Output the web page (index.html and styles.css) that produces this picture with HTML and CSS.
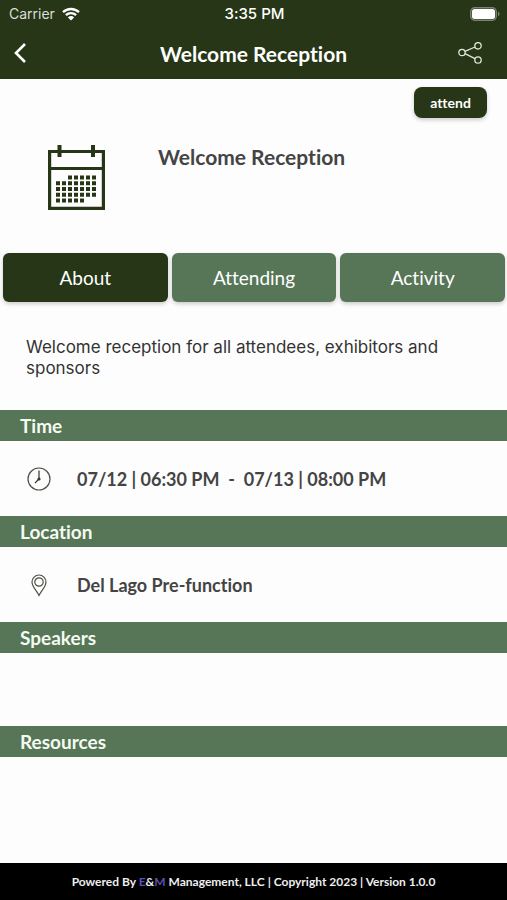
FILE: index.html
```html
<!DOCTYPE html>
<html lang="en">

<head>
  <meta charset="UTF-8" />
  <meta name="viewport" content="width=device-width, initial-scale=1" />
  <title>Welcome Reception</title>
  <link rel="stylesheet" href="styles.css">
</head>

<body>
  <header class="header">
    <div class="status">
      <div class="carrier">
        <span>Carrier</span>
        <svg viewBox="0 0 18 14" width="18" height="14">
          <path d="M1 5.2a11.6 11.6 0 0 1 16 0M3.9 8.2a7.4 7.4 0 0 1 10.2 0" fill="none" stroke="#fff" stroke-width="2.4" />
          <path d="M9 13.6l-3.1-3.2a4.4 4.4 0 0 1 6.2 0z" fill="#fff" />
        </svg>
      </div>
      <div class="clock">3:35 PM</div>
      <svg class="battery" viewBox="0 0 30 14" width="30" height="14">
        <rect x="0.75" y="0.75" width="25.5" height="12.5" rx="4" fill="none" stroke="#7b8374" stroke-width="1.5" />
        <rect x="2" y="2" width="23" height="10" rx="2.5" fill="#fff" />
        <path d="M28 4.8c2 .6 2 3.8 0 4.4z" fill="#7b8374" />
      </svg>
    </div>
    <div class="nav">
      <button class="icon-btn" type="button" aria-label="Back">
        <svg viewBox="0 0 14 22" width="14" height="22">
          <path d="M12 2L3 11l9 9" fill="none" stroke="#fff" stroke-width="2.6" />
        </svg>
      </button>
      <h1>Welcome Reception</h1>
      <button class="icon-btn share" type="button" aria-label="Share">
        <svg viewBox="0 0 24 22" width="24" height="22" fill="none" stroke="#dfe6da" stroke-width="1.3">
          <circle cx="4" cy="10.5" r="3.2" />
          <circle cx="20" cy="3.8" r="3.2" />
          <circle cx="20" cy="18" r="3.2" />
          <path d="M7 9.3l10-4.3M7 11.7l10 5" />
        </svg>
      </button>
    </div>
  </header>

  <main>
    <div class="actions">
      <button class="attend" type="button">attend</button>
    </div>

    <div class="event">
      <svg viewBox="0 0 57 65" width="57" height="65">
        <path d="M1.6 6.5h53.8v56.9H1.6zM1.6 23.5h53.8" fill="none" stroke="#273617" stroke-width="3.2" />
        <path d="M11.5 0v12M45 0v12" stroke="#273617" stroke-width="4" />
        <!-- days of the month -->
        <g stroke="#273617" stroke-width="4" stroke-dasharray="4 2">
          <path d="M20 32.5h28M8 38.2h40M8 44h40M8 49.7h40M8 55.4h28" />
        </g>
      </svg>
      <h2>Welcome Reception</h2>
    </div>

    <div class="tabs">
      <button class="tab active" type="button">About</button>
      <button class="tab" type="button">Attending</button>
      <button class="tab" type="button">Activity</button>
    </div>

    <p class="about">Welcome reception for all attendees, exhibitors and sponsors</p>

    <section>
      <h3>Time</h3>
      <div class="row">
        <svg viewBox="0 0 24 24" width="24" height="24">
          <circle cx="12" cy="12" r="11" fill="none" stroke="#4b5044" stroke-width="1.2" />
          <path d="M12 3.5V12l-4 4" fill="none" stroke="#33382c" stroke-width="1.2" />
          <circle cx="12" cy="12" r="1.6" fill="#33382c" />
        </svg>
        <span>07/12 | 06:30 PM&nbsp; - &nbsp;07/13 | 08:00 PM</span>
      </div>
    </section>

    <section>
      <h3>Location</h3>
      <div class="row">
        <svg viewBox="0 0 24 24" width="24" height="24" fill="none" stroke="#4b5044" stroke-width="1.2">
          <path d="M12 22.5C9.5 17.5 5 13.5 5 9a7 7 0 0 1 14 0c0 4.5-4.5 8.5-7 13.5z" />
          <circle cx="12" cy="9" r="4.2" />
        </svg>
        <span>Del Lago Pre-function</span>
      </div>
    </section>

    <section>
      <h3>Speakers</h3>
      <div class="empty"></div>
    </section>

    <section>
      <h3>Resources</h3>
    </section>
  </main>

  <footer>Powered By <span class="brand">E</span>&amp;<span class="brand">M</span> Management, LLC | Copyright 2023 | Version 1.0.0</footer>
</body>

</html>
```

FILE: styles.css
```css
* {
  box-sizing: border-box;
}

body {
  margin: 0;
  min-height: 100vh;
  display: flex;
  flex-direction: column;
  background-color: #fdfdfd;
  font-family: Lato, "Liberation Sans", sans-serif;
  font-variant-ligatures: none;
}

h1, h2, h3, p {
  margin: 0;
}

button {
  border: none;
  padding: 0;
  color: #fff;
  font-family: inherit;
  font-variant-ligatures: none;
  cursor: pointer;
}

svg {
  display: block;
}

/* header */
.header {
  background-color: #273617;
  color: #fff;
}

.status {
  display: grid;
  grid-template-columns: 1fr auto 1fr;
  align-items: center;
  height: 27px;
  padding: 0 7px 0 9px;
  font-family: Inter, sans-serif;
  font-size: 14px;
}

.carrier {
  display: flex;
  align-items: center;
  gap: 7px;
  color: #d9dfd5;
}

.clock {
  font-size: 15px;
  font-weight: 500;
}

.battery {
  justify-self: end;
}

.nav {
  display: grid;
  grid-template-columns: 1fr auto 1fr;
  align-items: center;
  height: 52px;
  padding: 0 13px;
}

.nav h1 {
  font-size: 21px;
  font-weight: 700;
}

.icon-btn {
  justify-self: start;
  background: none;
}

.share {
  justify-self: end;
  margin-right: 12px;
}

/* event */
main {
  flex: 1;
}

.actions {
  display: flex;
  justify-content: flex-end;
  padding: 8px 20px 0;
}

.attend {
  width: 73px;
  height: 31px;
  border-radius: 8px;
  background-color: #273617;
  font-size: 14px;
  font-weight: 700;
  box-shadow: 0 2px 4px rgba(0, 0, 0, 0.2);
}

.event {
  display: flex;
  gap: 53px;
  padding: 27px 48px 43px;
}

.event h2 {
  color: #444;
  font-size: 21px;
  line-height: 24px;
  font-weight: 700;
}

.tabs {
  display: flex;
  gap: 4px;
  padding: 0 2px 0 3px;
}

.tab {
  flex: 1;
  height: 49px;
  border-radius: 6px;
  background-color: #577657;
  font-size: 19px;
  box-shadow: 0 2px 4px rgba(0, 0, 0, 0.2);
}

.tab.active {
  background-color: #273617;
}

.about {
  padding: 35px 26px 31px;
  color: #333;
  font-family: Inter, sans-serif;
  font-size: 17px;
  line-height: 21px;
}

/* sections */
h3 {
  padding: 1px 20px 0;
  background-color: #577657;
  color: #f4fbf2;
  font-size: 19px;
  line-height: 30px;
  font-weight: 700;
}

.row {
  display: flex;
  align-items: center;
  gap: 26px;
  height: 75px;
  padding: 0 27px;
  color: #444;
  font-size: 18px;
  font-weight: 700;
}

.empty {
  height: 73px;
}

footer {
  background-color: #000;
  color: #eee;
  text-align: center;
  font-size: 12px;
  line-height: 37px;
  font-weight: 700;
}

.brand {
  color: #5a4fb0;
}
```
